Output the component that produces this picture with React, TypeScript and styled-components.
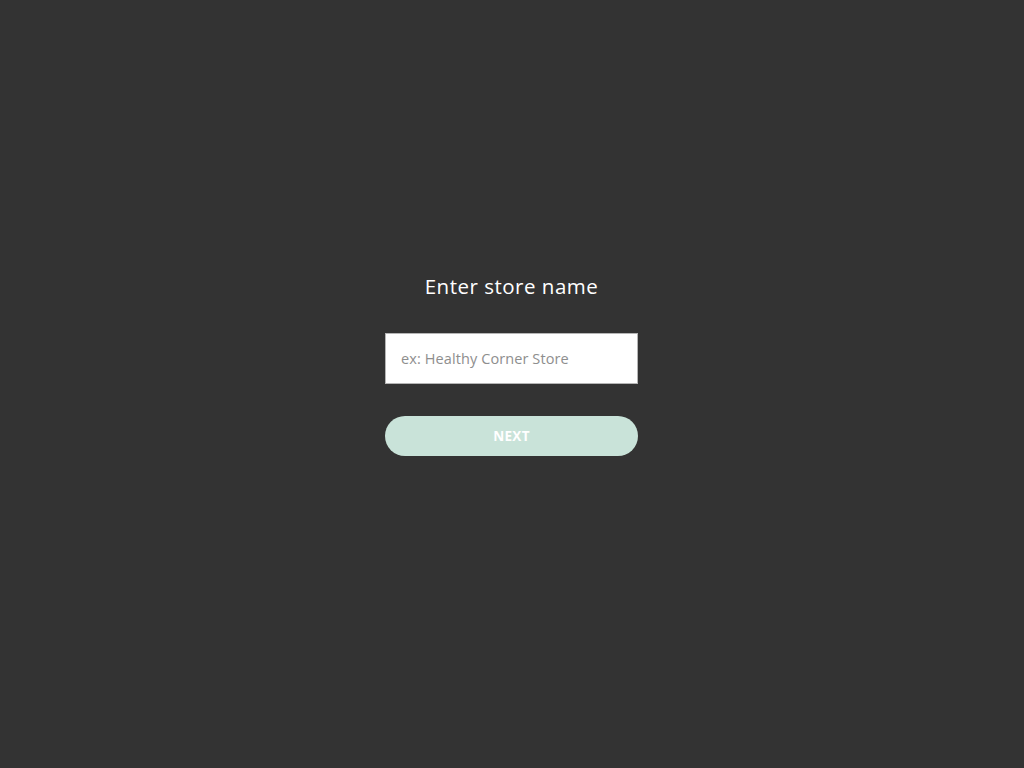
import React from "react";
import styled, { createGlobalStyle } from "styled-components";

const Global = createGlobalStyle`
  html, body { margin: 0; padding: 0; background: #333333; }
  body { font-family: "Open Sans", "Liberation Sans", sans-serif; }
  * { box-sizing: border-box; }
`;

const Page = styled.div`
  width: 1024px;
  height: 768px;
  background: #333333;
  display: flex;
  flex-direction: column;
  align-items: center;
  padding-top: 272px;
  padding-right: 1px;
`;

const Form = styled.div`
  width: 253px;
  display: flex;
  flex-direction: column;
  align-items: stretch;
`;

const Title = styled.h1`
  margin: 0;
  font-size: 20.5px;
  font-weight: 500;
  line-height: 28px;
  color: #ffffff;
  text-align: center;
  letter-spacing: 0.5px;
`;

const Input = styled.input`
  margin-top: 33px;
  height: 51px;
  width: 100%;
  border: 1px solid #b5b5b5;
  background: #ffffff;
  padding: 0 15px;
  font-family: inherit;
  font-size: 14.5px;
  letter-spacing: 0.1px;
  color: #333;
  outline: none;
  &::placeholder { color: #8e8e8e; }
`;

const Button = styled.button`
  margin-top: 32px;
  height: 40px;
  width: 100%;
  border: none;
  border-radius: 20px;
  background: #c9e3d9;
  color: #ffffff;
  font-family: inherit;
  font-weight: 700;
  font-size: 13.5px;
  letter-spacing: 0.3px;
  cursor: pointer;
`;

export default function App() {
  return (
    <>
      <Global />
      <Page>
        <Form>
          <Title>Enter store name</Title>
          <Input placeholder="ex: Healthy Corner Store" />
          <Button>NEXT</Button>
        </Form>
      </Page>
    </>
  );
}
